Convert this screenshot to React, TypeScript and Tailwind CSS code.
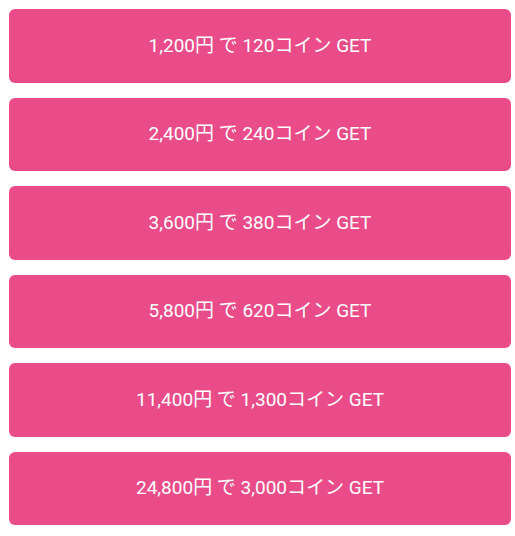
export default function App() {
  const items = [
    "1,200円 で 120コイン GET",
    "2,400円 で 240コイン GET",
    "3,600円 で 380コイン GET",
    "5,800円 で 620コイン GET",
    "11,400円 で 1,300コイン GET",
    "24,800円 で 3,000コイン GET",
  ];
  return (
    <div className="flex flex-col gap-[15px] pt-[9px] pl-[9px] pr-[4px] bg-white" style={{ fontFamily: "Roboto, 'Noto Sans CJK JP', sans-serif" }}>
      {items.map((t) => (
        <button key={t} className="h-[73.5px] w-full rounded-[6px] bg-[#ea4c89] text-white text-[19px] flex items-center justify-center">
          {t}
        </button>
      ))}
    </div>
  );
}
